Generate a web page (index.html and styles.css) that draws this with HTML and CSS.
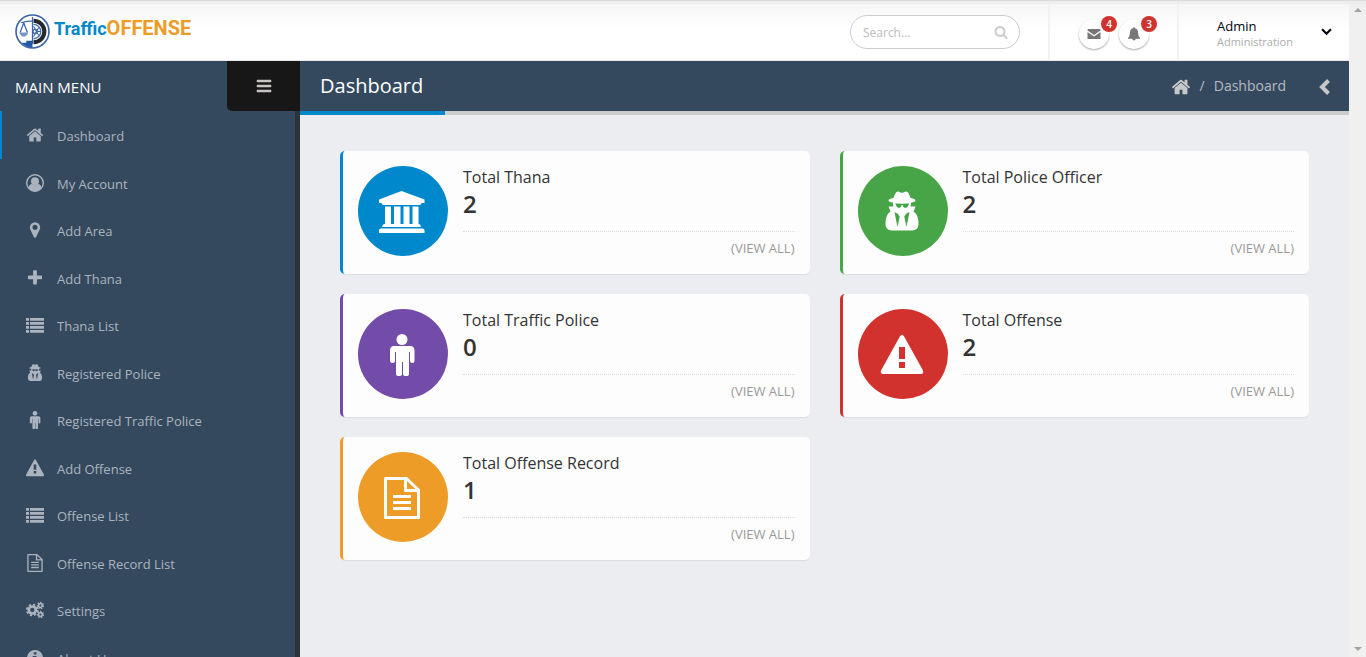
FILE: index.html
```html
<!DOCTYPE html>
<html lang="en">
<head>
<meta charset="utf-8">
<title>Dashboard - TrafficOFFENSE</title>
<link rel="stylesheet" href="styles.css">
</head>
<body>
<svg class="defs" aria-hidden="true">
  <symbol id="home" viewBox="0 0 1792 1792"><path d="M1472 992v480q0 26-19 45t-45 19h-384v-384h-256v384h-384q-26 0-45-19t-19-45v-480q0-1 .5-3t.5-3l575-474 575 474q1 2 1 6zm223-69l-62 74q-8 9-21 11h-3q-13 0-21-7l-692-577-692 577q-12 8-24 7-13-2-21-11l-62-74q-8-10-7-23.5t11-21.5l719-599q32-26 76-26t76 26l244 204v-195q0-14 9-23t23-9h192q14 0 23 9t9 23v408l219 182q10 8 11 21.5t-7 23.5z"/></symbol>
  <symbol id="account" viewBox="0 0 18 18"><circle cx="9" cy="9" r="8.3" fill="none" stroke="currentColor" stroke-width="1.4"/><circle cx="9" cy="7.2" r="4"/><path d="M2.500 13.600Q3.300 10 6 10q3 2.600 6 0 2.700 0 3.500 3.600Q13 17.400 9 17.400t-6.500-3.800z"/></symbol>
  <symbol id="marker" viewBox="0 0 1792 1792"><path d="M1152 640q0-106-75-181t-181-75-181 75-75 181 75 181 181 75 181-75 75-181zm256 0q0 109-33 179l-364 774q-16 33-47.5 52t-67.5 19-67.5-19-46.5-52l-365-774q-33-70-33-179 0-212 150-362t362-150 362 150 150 362z"/></symbol>
  <symbol id="plus" viewBox="0 0 1792 1792"><path d="M1600 736v192q0 40-28 68t-68 28h-416v416q0 40-28 68t-68 28h-192q-40 0-68-28t-28-68v-416h-416q-40 0-68-28t-28-68v-192q0-40 28-68t68-28h416v-416q0-40 28-68t68-28h192q40 0 68 28t28 68v416h416q40 0 68 28t28 68z"/></symbol>
  <symbol id="list" viewBox="0 0 18 18"><path d="M0 2h3v2.700H0zM4 2h14v2.700H4zM0 6h3v2.700H0zM4 6h14v2.700H4zM0 10h3v2.700H0zM4 10h14v2.700H4zM0 14h3v2.700H0zM4 14h14v2.700H4z"/></symbol>
  <symbol id="secret" viewBox="0 0 1792 1792"><path d="M704 1536l96-448-96-128-128-64zm384 0l128-640-128 64-96 128zm104-993q-2-4-4-6-10-8-96-8-70 0-167 19-7 2-21 2t-21-2q-97-19-167-19-86 0-96 8-2 2-4 6 2 18 4 27 2 3 7.500 6.500t7.500 10.500q2 4 7.500 20.500t7 20.500 7.500 17 8.500 17 9 14 12 13.500 14 9.500 17.500 8 20.500 4 24.500 2q36 0 59-12.500t32.500-30 14.500-34.500 11.500-29.500 17.500-12.500h12q11 0 17.500 12.500t11.500 29.500 14.500 34.500 32.500 30 59 12.500q13 0 24.500-2t20.500-4 17.500-8 14-9.500 12-13.500 9-14 8.500-17 7.500-17 7-20.500 7.500-20.500q2-7 7.500-10.500t7.500-6.500q2-9 4-27zm408 879q0 121-73 190t-194 69h-874q-121 0-194-69t-73-190q0-61 4.500-118t19-125.500 37.500-123.500 63.500-103.500 93.500-74.500l-90-220h214q-22-64-22-128 0-12 2-32-194-40-194-96 0-57 210-99 17-62 51.500-134t70.500-114q32-37 76-37 30 0 84 31t84 31 84-31 84-31q44 0 76 37 36 42 70.500 114t51.500 134q210 42 210 99 0 56-194 96 7 81-20 160h214l-82 225q63 33 107.500 96.500t65.500 143.500 29 151.500 8 157.500z"/></symbol>
  <symbol id="male" viewBox="0 0 42 42"><circle cx="21" cy="5.500" r="5.500"/><path d="M13 12h16q4.500 0 4.500 4.500V27q0 2-2.250 2T29 27v-9h-1v22q0 2-3 2t-3-2V28h-1v12q0 2-3 2t-3-2V18h-1v9q0 2-2.500 2T9 27V16.500Q9 12 13 12z"/></symbol>
  <symbol id="warning" viewBox="0 0 42 42"><path fill-rule="evenodd" d="M19 2.300q2-3 4 0l19 34.200q1 3.500-2 3.500H2q-3 0-2-3.500zM18 13v12h6V13zm0 15v6h6v-6z"/></symbol>
  <symbol id="doc" viewBox="0 0 42 42"><path d="M4.500 1.500h21L37.500 13v27.500h-33zM24.500 2v11.500H37" fill="none" stroke="currentColor" stroke-width="3" stroke-linejoin="round"/><path d="M12 18h18v3H12zm0 6h18v3H12zm0 6h18v3H12z"/></symbol>
  <symbol id="bank" viewBox="0 0 46 42"><path d="M22.500 0 45.500 8.500V12h-3q0 2-2 2h-36q-2 0-2-2H0V8.500zM6 15.500h6V33h3V15.500h6.500V33h3V15.500h6V33h3V15.500h6V33q2 0 2.500 3h-39Q3.500 33 6 33zM2 37.500h41.500q2 0 2 2V42H0v-2.500q0-2 2-2z"/></symbol>
  <symbol id="cogs" viewBox="0 0 20 18"><g fill="none" stroke="currentColor"><circle cx="7" cy="9" r="3.900" stroke-width="3"/><circle cx="7" cy="9" r="6" stroke-width="2" stroke-dasharray="2.500 2.212"/><circle cx="16" cy="4" r="2.100" stroke-width="1.700"/><circle cx="16" cy="4" r="3.400" stroke-width="1.400" stroke-dasharray="1.600 1.452"/><circle cx="16" cy="14" r="2.100" stroke-width="1.700"/><circle cx="16" cy="14" r="3.400" stroke-width="1.400" stroke-dasharray="1.600 1.452"/></g></symbol>
  <symbol id="info" viewBox="0 0 18 18"><path fill-rule="evenodd" d="M9 1a8 8 0 1 0 .010 0zM7.800 3.300h2.700v2.200H7.800zM6.700 7h3.800v5h1.200v1.800h-5V12h1.200V8.800H6.700z"/></symbol>
  <symbol id="search" viewBox="0 0 1792 1792"><path d="M1216 832q0-185-131.500-316.500t-316.500-131.500-316.500 131.500-131.500 316.500 131.500 316.500 316.500 131.500 316.500-131.500 131.500-316.500zm512 832q0 52-38 90t-90 38q-54 0-90-38l-343-342q-179 124-399 124-143 0-273.500-55.500t-225-150-150-225-55.500-273.500 55.500-273.500 150-225 225-150 273.500-55.500 273.500 55.500 225 150 150 225 55.500 273.500q0 220-124 399l343 343q37 37 37 90z"/></symbol>
  <symbol id="mail" viewBox="0 0 14 14"><path d="M1 2h12q.5 0 .5 1v.5L7 8 .5 3.500V3q0-1 .5-1zM.5 5 7 9.500 13.500 5v6.500q0 .5-.5.5H1q-.5 0-.5-.5z"/></symbol>
  <symbol id="bell" viewBox="0 0 14 14"><path d="M6.200 1.200q0-1.200.8-1.200t.8 1.200q3.200.6 3.200 4.300 0 4 2 5.500v.7H8.800Q8.500 13.500 7 13.500t-1.800-1.800H1V11q2-1.500 2-5.500 0-3.700 3.200-4.300z"/></symbol>
  <symbol id="bars" viewBox="0 0 16 14"><path d="M1 1h14v2H1zM1 6h14v2H1zM1 11h14v2H1z" stroke="currentColor" stroke-width=".5" stroke-linejoin="round"/></symbol>
</svg>

<div class="window">
  <div class="page">
    <header class="topbar">
      <a class="logo" href="#">
        <svg class="emblem" viewBox="0 0 34 34" aria-hidden="true">
          <circle cx="17" cy="17" r="16" fill="#fff" stroke="#3a66a8" stroke-width="1.600"/>
          <path d="M18 6.500a10.500 10.500 0 0 1 0 21" fill="none" stroke="#26282d" stroke-width="4"/>
          <path d="M18 10a7 7 0 0 1 0 14" fill="none" stroke="#4772b0" stroke-width="1.300"/>
          <circle cx="19.500" cy="17" r="2" fill="none" stroke="#3a66a8" stroke-width="1.300"/>
          <path d="M18 12l5 9M18 22l5-9M21 17h4" stroke="#3a66a8"/>
          <path d="M17 3v26M6 8.500q5-2 11-1.500M8.500 8.500 5 18m3.500-9.500L12 18" fill="none" stroke="#3a66a8" stroke-width="1.200"/>
          <path d="M4 18h9q-1.500 4-4.500 4T4 18z" fill="#7296c8"/>
          <path d="M17 26v6.500Q10 32 6.500 28H11v-2z" fill="#2457a6"/>
        </svg>
        <span class="brand"><span class="brand-a">Traffic</span><span class="brand-b">OFFENSE</span></span>
      </a>
      <form class="search" role="search">
        <input type="search" aria-label="Search" placeholder="Search...">
        <button type="submit" aria-label="Search"><svg><use href="#search"/></svg></button>
      </form>
      <div class="notices">
        <button type="button" aria-label="Messages"><svg><use href="#mail"/></svg><span class="badge">4</span></button>
        <button type="button" aria-label="Alerts"><svg><use href="#bell"/></svg><span class="badge">3</span></button>
      </div>
      <button type="button" class="user">
        <span class="who"><span class="name">Admin</span><span class="role">Administration</span></span>
        <svg viewBox="0 0 10 10" aria-hidden="true"><path d="M1 3l4 4 4-4" fill="none" stroke="currentColor" stroke-width="2"/></svg>
      </button>
    </header>

    <div class="body">
      <aside class="sidebar">
        <div class="sidebar-head">
          <span class="menu-title">MAIN MENU</span>
          <button type="button" aria-label="Toggle menu"><svg><use href="#bars"/></svg></button>
        </div>
        <nav>
          <ul>
            <li class="active"><a href="#"><svg><use href="#home"/></svg>Dashboard</a></li>
            <li><a href="#"><svg><use href="#account"/></svg>My Account</a></li>
            <li><a href="#"><svg><use href="#marker"/></svg>Add Area</a></li>
            <li><a href="#"><svg><use href="#plus"/></svg>Add Thana</a></li>
            <li><a href="#"><svg><use href="#list"/></svg>Thana List</a></li>
            <li><a href="#"><svg><use href="#secret"/></svg>Registered Police</a></li>
            <li><a href="#"><svg><use href="#male"/></svg>Registered Traffic Police</a></li>
            <li><a href="#"><svg><use href="#warning"/></svg>Add Offense</a></li>
            <li><a href="#"><svg><use href="#list"/></svg>Offense List</a></li>
            <li><a href="#"><svg><use href="#doc"/></svg>Offense Record List</a></li>
            <li><a href="#"><svg><use href="#cogs"/></svg>Settings</a></li>
            <li><a href="#"><svg><use href="#info"/></svg>About Us</a></li>
          </ul>
        </nav>
      </aside>

      <main>
        <div class="page-head">
          <h1>Dashboard</h1>
          <div class="crumbs">
            <a href="#" aria-label="Home"><svg><use href="#home"/></svg></a>
            <span>/</span>
            <span>Dashboard</span>
          </div>
          <button type="button" aria-label="Open panel"><svg viewBox="0 0 12 16"><path d="M10.500 1.500 4 8l6.500 6.500" fill="none" stroke="currentColor" stroke-width="4"/></svg></button>
        </div>
        <div class="strip"><div class="strip-mark"></div></div>
        <div class="cards">
          <section class="card blue">
            <div class="disc"><svg><use href="#bank"/></svg></div>
            <div class="info"><div class="summary"><h2>Total Thana</h2><strong>2</strong></div><a href="#">(VIEW ALL)</a></div>
          </section>
          <section class="card green">
            <div class="disc"><svg><use href="#secret"/></svg></div>
            <div class="info"><div class="summary"><h2>Total Police Officer</h2><strong>2</strong></div><a href="#">(VIEW ALL)</a></div>
          </section>
          <section class="card purple">
            <div class="disc"><svg><use href="#male"/></svg></div>
            <div class="info"><div class="summary"><h2>Total Traffic Police</h2><strong>0</strong></div><a href="#">(VIEW ALL)</a></div>
          </section>
          <section class="card red">
            <div class="disc"><svg><use href="#warning"/></svg></div>
            <div class="info"><div class="summary"><h2>Total Offense</h2><strong>2</strong></div><a href="#">(VIEW ALL)</a></div>
          </section>
          <section class="card orange">
            <div class="disc"><svg><use href="#doc"/></svg></div>
            <div class="info"><div class="summary"><h2>Total Offense Record</h2><strong>1</strong></div><a href="#">(VIEW ALL)</a></div>
          </section>
        </div>
      </main>
    </div>
  </div>
  <div class="scrollbar" aria-hidden="true">
    <svg viewBox="0 0 8 4"><path d="M0 4l4-4 4 4z"/></svg>
    <svg viewBox="0 0 8 4"><path d="M0 0l4 4 4-4z"/></svg>
  </div>
</div>
</body>
</html>
```

FILE: styles.css
```css
* { box-sizing: border-box; }

body {
  margin: 0;
  height: 100vh;
  overflow: hidden;
  display: flex;
  flex-direction: column;
  border-top: 1px solid #dbdbdb;
  font: 13px/22px "Open Sans", "Noto Sans", sans-serif;
  color: #333;
  background: #ecedf0;
}

.defs { display: none; }
svg { display: block; fill: currentColor; }
a { color: inherit; text-decoration: none; }
button {
  border: 0;
  padding: 0;
  background: none;
  font: inherit;
  color: inherit;
  cursor: pointer;
}
h1, h2 { margin: 0; font-weight: 400; }

.window { flex: 1; min-height: 0; display: flex; border-top: 3px solid #ededed; }
.page { flex: 1; min-width: 0; display: flex; flex-direction: column; }

.scrollbar {
  width: 17px;
  padding: 4px 0 6px;
  display: flex;
  flex-direction: column;
  align-items: center;
  justify-content: space-between;
  background: #f0f0f0;
  color: #a3a3a3;
}
.scrollbar svg { width: 8px; height: 4px; }

.topbar {
  height: 57px;
  flex: none;
  display: flex;
  align-items: center;
  border-bottom: 1px solid #e9e9e6;
  background: linear-gradient(#f6f6f6, #fff 45%);
}
.logo {
  display: flex;
  align-items: center;
  gap: 4px;
  padding: 0 0 2px 15px;
  margin-right: auto;
}
.emblem { width: 35px; height: 35px; }
.brand {
  display: flex;
  align-items: baseline;
  padding-bottom: 5px;
  font-family: Roboto, sans-serif;
  font-weight: 700;
}
.brand-a { font-size: 18px; color: #0088cc; }
.brand-b { font-size: 20px; color: #ed9c28; }

.search {
  width: 170px;
  height: 34px;
  display: flex;
  align-items: center;
  padding: 0 11px 0 12px;
  border: 1px solid #ccc;
  border-radius: 17px;
  background: #fff;
}
.search input {
  flex: 1;
  min-width: 0;
  border: 0;
  padding: 2px 0 0;
  outline: 0;
  background: none;
  font: 12px/18px "Open Sans", "Noto Sans", sans-serif;
}
.search input::placeholder { color: #bbb; }
.search button { color: #ccc; }
.search svg { width: 14px; height: 14px; }

.notices {
  align-self: stretch;
  display: flex;
  align-items: center;
  gap: 10px;
  margin-left: 28px;
  padding: 4px 28px 0 29px;
  border: solid #f2f2f2;
  border-width: 0 2px;
}
.notices button {
  position: relative;
  width: 30px;
  height: 30px;
  display: grid;
  place-items: center;
  border-radius: 50%;
  background: #fff;
  box-shadow: 0 1px 2px rgba(0, 0, 0, .35);
  color: #777;
}
.notices svg { width: 14px; height: 14px; }
.badge {
  position: absolute;
  top: -3px;
  right: -8px;
  width: 16px;
  border-radius: 8px;
  background: #d2322d;
  color: #fff;
  font-size: 10px;
  line-height: 16px;
  font-weight: 600;
}

.user {
  display: flex;
  align-items: center;
  gap: 28px;
  padding: 2px 17px 0 38px;
  text-align: left;
  color: #000011;
}
.who { display: flex; flex-direction: column; }
.name { line-height: 16px; }
.role { font-size: 11px; line-height: 15px; color: #acacac; }
.user svg { width: 11px; height: 11px; margin-bottom: 4px; }

.body { flex: 1; min-height: 0; display: flex; }

.sidebar {
  width: 300px;
  flex: none;
  overflow: hidden;
  background: #34495e;
  color: #abb4be;
}
.sidebar-head {
  height: 50px;
  display: flex;
  align-items: center;
  justify-content: space-between;
  padding-left: 15px;
  font-size: 15px;
  color: #fff;
}
.menu-title { padding-top: 2px; }
.sidebar-head button {
  width: 73px;
  height: 50px;
  display: grid;
  place-items: center;
  border-radius: 0 0 0 5px;
  background: #171717;
  color: #c8c4c4;
}
.sidebar-head svg { width: 16px; height: 14px; }
.sidebar nav { border-right: 5px solid #2e323b; }
.sidebar ul { margin: 0; padding: 0; list-style: none; }
.sidebar li { height: 47px; }
.sidebar li:nth-child(odd) { height: 48px; }
.sidebar li a {
  height: 100%;
  display: flex;
  align-items: center;
  gap: 13px;
  padding: 2px 0 0 26px;
}
.sidebar li svg { width: 18px; height: 18px; margin-bottom: 2px; }
.sidebar .active { box-shadow: inset 2px 0 #0088cc; }

main { flex: 1; min-width: 0; }
.page-head {
  height: 50px;
  display: flex;
  align-items: center;
  padding: 0 19px 0 20px;
  background: #34495e;
  color: #fff;
}
.page-head h1 { margin-right: auto; font-size: 20px; line-height: 30px; }
.crumbs { display: flex; align-items: center; gap: 9px; font-size: 14px; color: #b4bbc3; }
.crumbs svg { width: 20px; height: 20px; margin-top: 2px; color: #c8c8c8; }
.page-head button { margin: 2px 0 0 32px; color: #c8c8c8; }
.page-head button svg { width: 12px; height: 16px; }
.strip { height: 4px; background: #ccc; }
.strip-mark { width: 145px; height: 4px; background: #0088cc; }

.cards {
  display: grid;
  grid-template-columns: 1fr 1fr;
  gap: 20px 30px;
  padding: 36px 40px;
}
.card {
  display: flex;
  gap: 15px;
  padding: 15px;
  border-left: 3px solid var(--tone);
  border-radius: 5px;
  background: #fdfdfd;
  box-shadow: 0 1px 1px rgba(0, 0, 0, .07);
}
.blue { --tone: #0088cc; }
.green { --tone: #47a447; }
.purple { --tone: #734ba9; }
.red { --tone: #d2322d; }
.orange { --tone: #ed9c28; }
.disc {
  width: 90px;
  height: 90px;
  flex: none;
  display: grid;
  place-items: center;
  padding: 2px 2px 0 0;
  border-radius: 50%;
  background: var(--tone);
  color: #fff;
}
.disc svg { width: 46px; height: 42px; }
.info { flex: 1; }
.summary { height: 66px; border-bottom: 1px dotted #ddd; }
.summary h2 { font-size: 16px; line-height: 22px; }
.summary strong { display: block; font-size: 24px; line-height: 32px; font-weight: 600; }
.info a { display: block; padding-top: 5px; text-align: right; color: #999; }
```
